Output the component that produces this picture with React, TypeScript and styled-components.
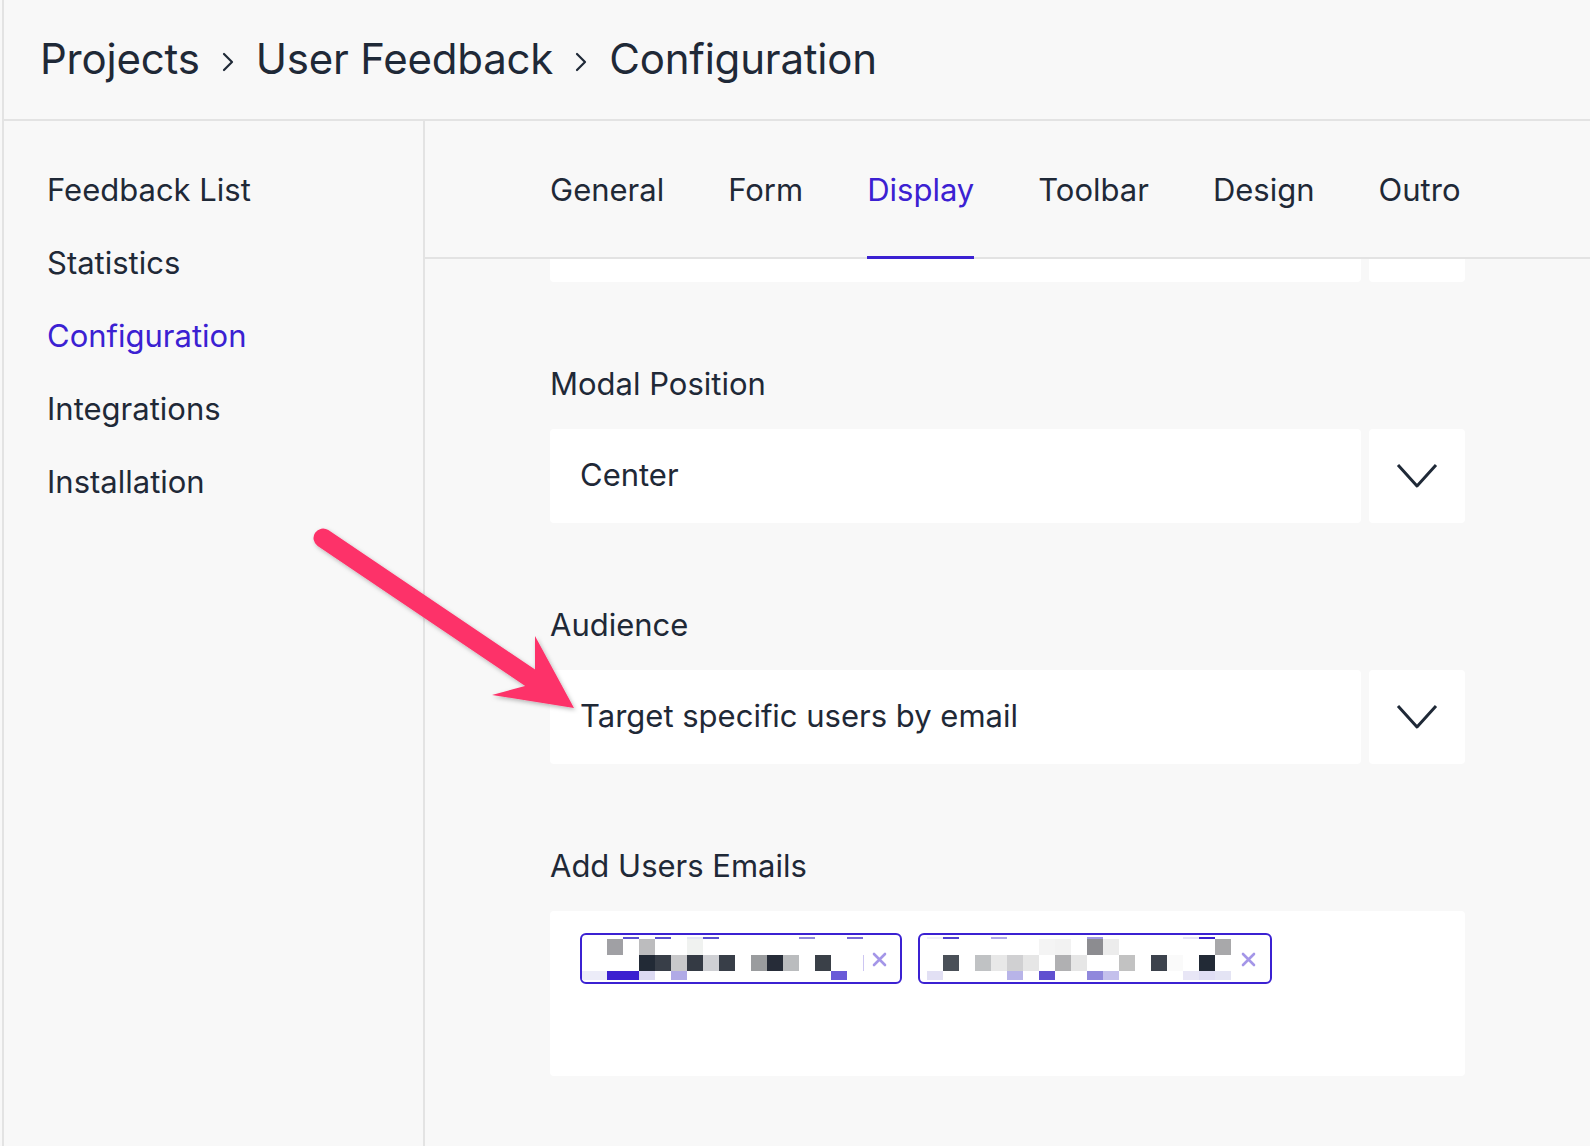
import styled, { createGlobalStyle } from "styled-components";

const GlobalStyle = createGlobalStyle`
  html, body {
    margin: 0;
    padding: 0;
    background: #f8f8f8;
  }
  body {
    font-family: Inter, "Noto Sans", "Liberation Sans", sans-serif;
    color: #1f2937;
  }
  * {
    box-sizing: border-box;
  }
`;

const ACCENT = "#3b21d2";
const LINE = "#e3e3e3";

type Cell = [number, string];
type Rows = { a: Cell[]; b: Cell[]; c: Cell[]; d: Cell[] };

const ROW_Y: Record<keyof Rows, [number, number]> = {
  a: [936, 2],
  b: [938, 16],
  c: [954, 16],
  d: [970, 9],
};

const chipOne: Rows = {
  a: [
    [624, "#5a4fd0"],
    [656, "#5a4fd0"],
    [688, "#e4e4f4"],
    [704, "#5a4fd0"],
    [800, "#9088dc"],
    [848, "#7a6ad8"],
  ],
  b: [
    [608, "#a0a0a4"],
    [640, "#bcbcbe"],
    [688, "#f0f2f0"],
  ],
  c: [
    [640, "#222a36"],
    [656, "#383e48"],
    [672, "#c8c8ca"],
    [688, "#343a44"],
    [704, "#cfd0d4"],
    [720, "#383e48"],
    [752, "#9a9c9e"],
    [768, "#262c38"],
    [784, "#babcbe"],
    [816, "#3a4048"],
  ],
  d: [
    [576, "#ececf8"],
    [592, "#ececf8"],
    [608, "#3b20d0"],
    [624, "#3b20d0"],
    [640, "#dcdaf2"],
    [672, "#b0aae6"],
    [832, "#6a5ad8"],
  ],
};

const chipTwo: Rows = {
  a: [
    [928, "#f0f0f8"],
    [944, "#5040d0"],
    [992, "#b0a8e8"],
    [1088, "#a098e0"],
    [1184, "#e6e4f6"],
    [1200, "#3b20d0"],
  ],
  b: [
    [1040, "#f4f4f4"],
    [1056, "#f2f2f2"],
    [1088, "#8c8c90"],
    [1104, "#ececec"],
    [1216, "#a8a8aa"],
  ],
  c: [
    [944, "#4a5058"],
    [976, "#c0c2c4"],
    [992, "#e8e8e8"],
    [1008, "#d0d0d2"],
    [1024, "#e6e6e6"],
    [1056, "#b0b0b2"],
    [1072, "#e6e6e6"],
    [1120, "#c2c2c2"],
    [1152, "#3c424c"],
    [1168, "#fafafa"],
    [1200, "#222a36"],
  ],
  d: [
    [928, "#e2e0f4"],
    [1008, "#b8b4e8"],
    [1040, "#6050d0"],
    [1088, "#9088dc"],
    [1104, "#c4c0ec"],
    [1184, "#e8e6f6"],
    [1200, "#e0def4"],
    [1216, "#e4e4f4"],
  ],
};

const Page = styled.div`
  position: relative;
  height: 100vh;
  margin-left: 2px;
  border-left: 2px solid ${LINE};
  display: flex;
  flex-direction: column;
  overflow: hidden;
`;

const Header = styled.header`
  height: 121px;
  flex-shrink: 0;
  display: flex;
  align-items: center;
  padding: 0 0 2px 36px;
  border-bottom: 2px solid ${LINE};
`;

const Crumbs = styled.nav`
  display: flex;
  align-items: center;
  gap: 22px;
  font-size: 42px;
  line-height: 50px;
  letter-spacing: -0.2px;
`;

const Crumb = styled.span`
  color: #1f2937;
`;

const Body = styled.div`
  flex: 1;
  display: grid;
  grid-template-columns: 421px 1fr;
  min-height: 0;
`;

const Sidebar = styled.aside`
  border-right: 2px solid ${LINE};
  padding: 49px 0 0 43px;
  display: flex;
  flex-direction: column;
  gap: 33px;
`;

const NavItem = styled.a<{ $active?: boolean }>`
  font-size: 31px;
  line-height: 40px;
  color: ${(p) => (p.$active ? ACCENT : "#1f2937")};
  text-decoration: none;
`;

const Main = styled.main`
  display: flex;
  flex-direction: column;
  min-width: 0;
`;

const TabBar = styled.div`
  border-bottom: 2px solid ${LINE};
  flex-shrink: 0;
`;

const Column = styled.div`
  width: 915px;
  margin: 0 auto;
`;

const TabRow = styled(Column)`
  display: flex;
  gap: 64px;
  margin-bottom: -2px;
`;

const Tab = styled.div<{ $active?: boolean }>`
  font-size: 31px;
  line-height: 40px;
  padding: 49px 0 46px;
  border-bottom: 3px solid ${(p) => (p.$active ? ACCENT : "transparent")};
  color: ${(p) => (p.$active ? ACCENT : "#1f2937")};
`;

const Content = styled.div`
  flex: 1;
  overflow: hidden;
`;

const Field = styled.div`
  margin-top: 82px;
  display: flex;
  flex-direction: column;
  gap: 25px;
`;

const Label = styled.label`
  font-size: 31px;
  line-height: 40px;
`;

const SelectRow = styled.div<{ $clipped?: boolean }>`
  display: flex;
  gap: 8px;
  height: ${(p) => (p.$clipped ? "23px" : "94px")};
`;

const SelectValue = styled.div<{ $clipped?: boolean }>`
  flex: 1;
  background: #fff;
  border-radius: ${(p) => (p.$clipped ? "0 0 4px 4px" : "4px")};
  display: flex;
  align-items: center;
  padding: 0 0 3px 30px;
  font-size: 31px;
`;

const SelectButton = styled.div<{ $clipped?: boolean }>`
  width: 96px;
  background: #fff;
  border-radius: ${(p) => (p.$clipped ? "0 0 4px 4px" : "4px")};
  display: flex;
  align-items: center;
  justify-content: center;
`;

const EmailBox = styled.div`
  height: 165px;
  background: #fff;
  border-radius: 4px;
  padding: 22px 30px;
  display: flex;
  flex-wrap: wrap;
  align-content: flex-start;
  gap: 16px;
`;

const Chip = styled.div`
  height: 51px;
  border: 2px solid ${ACCENT};
  border-radius: 6px;
  background: #fff;
  display: flex;
  align-items: center;
  overflow: hidden;
`;

const RemoveButton = styled.span<{ $right: number }>`
  display: flex;
  margin-left: 7px;
  margin-right: ${(p) => p.$right}px;
  margin-top: 2px;
`;

const Overlay = styled.svg`
  position: absolute;
  left: -4px;
  top: 0;
  pointer-events: none;
  overflow: visible;
`;

const CrumbChevron = () => (
  <svg width="12" height="24" viewBox="0 0 12 24" style={{ marginTop: 6 }}>
    <polyline
      points="2,4 10,12 2,20"
      fill="none"
      stroke="#1f2937"
      strokeWidth="2.2"
      strokeLinecap="round"
      strokeLinejoin="round"
    />
  </svg>
);

const ChevronDown = () => (
  <svg width="42" height="26" viewBox="0 0 42 26">
    <polyline
      points="2,2 21,23 40,2"
      fill="none"
      stroke="#1f2937"
      strokeWidth="3"
      strokeLinejoin="round"
    />
  </svg>
);

const XIcon = () => (
  <svg width="15" height="15" viewBox="0 0 15 15">
    <path
      d="M2 2 L13 13 M13 2 L2 13"
      stroke="#a496e8"
      strokeWidth="2.6"
      strokeLinecap="round"
    />
  </svg>
);

const Mosaic = ({
  rows,
  originX,
  width,
  divider,
}: {
  rows: Rows;
  originX: number;
  width: number;
  divider?: number;
}) => (
  <svg
    width={width}
    height={47}
    viewBox={`${originX} 934 ${width} 47`}
    style={{ flexShrink: 0 }}
  >
    {(Object.keys(rows) as (keyof Rows)[]).map((key) =>
      rows[key].map(([x, color]) => (
        <rect
          key={`${key}-${x}`}
          x={x}
          y={ROW_Y[key][0]}
          width={16}
          height={ROW_Y[key][1]}
          fill={color}
        />
      ))
    )}
    {divider && <rect x={divider} y={954} width={1} height={16} fill="#cdc6f2" />}
  </svg>
);

const Select = ({ value }: { value: string }) => (
  <SelectRow>
    <SelectValue>{value}</SelectValue>
    <SelectButton>
      <ChevronDown />
    </SelectButton>
  </SelectRow>
);

const navItems = ["Feedback List", "Statistics", "Configuration", "Integrations", "Installation"];
const tabs = ["General", "Form", "Display", "Toolbar", "Design", "Outro"];

const App = () => {
  return (
    <>
      <GlobalStyle />
      <Page>
        <Header>
          <Crumbs>
            <Crumb>Projects</Crumb>
            <CrumbChevron />
            <Crumb>User Feedback</Crumb>
            <CrumbChevron />
            <Crumb>Configuration</Crumb>
          </Crumbs>
        </Header>
        <Body>
          <Sidebar>
            {navItems.map((item) => (
              <NavItem key={item} $active={item === "Configuration"}>
                {item}
              </NavItem>
            ))}
          </Sidebar>
          <Main>
            <TabBar>
              <TabRow>
                {tabs.map((tab) => (
                  <Tab key={tab} $active={tab === "Display"}>
                    {tab}
                  </Tab>
                ))}
              </TabRow>
            </TabBar>
            <Content>
              <Column>
                <SelectRow $clipped>
                  <SelectValue $clipped />
                  <SelectButton $clipped />
                </SelectRow>
                <Field>
                  <Label>Modal Position</Label>
                  <Select value="Center" />
                </Field>
                <Field>
                  <Label>Audience</Label>
                  <Select value="Target specific users by email" />
                </Field>
                <Field>
                  <Label>Add Users Emails</Label>
                  <EmailBox>
                    <Chip>
                      <Mosaic rows={chipOne} originX={583} width={283} divider={864} />
                      <RemoveButton $right={13}>
                        <XIcon />
                      </RemoveButton>
                    </Chip>
                    <Chip>
                      <Mosaic rows={chipTwo} originX={921} width={314} />
                      <RemoveButton $right={14}>
                        <XIcon />
                      </RemoveButton>
                    </Chip>
                  </EmailBox>
                </Field>
              </Column>
            </Content>
          </Main>
        </Body>
        <Overlay width="1590" height="1146" viewBox="0 0 1590 1146">
          <defs>
            <filter id="arrowShadow" x="-20%" y="-20%" width="140%" height="140%">
              <feDropShadow dx="1.5" dy="2" stdDeviation="2" floodColor="#000" floodOpacity="0.28" />
            </filter>
          </defs>
          <g filter="url(#arrowShadow)" fill="#fd3169">
            <line
              x1="323"
              y1="538"
              x2="532"
              y2="679"
              stroke="#fd3169"
              strokeWidth="19"
              strokeLinecap="round"
            />
            <polygon points="535,636 574,708 492,695 525,686 535,670" />
          </g>
        </Overlay>
      </Page>
    </>
  );
};

export default App;
